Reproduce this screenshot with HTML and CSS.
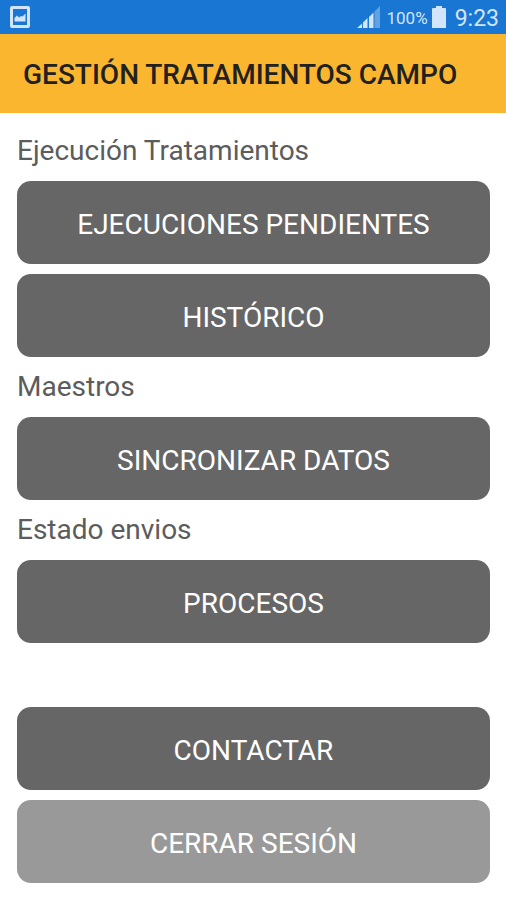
FILE: index.html
```html
<!DOCTYPE html>
<html lang="es">
<head>
<meta charset="utf-8">
<meta name="viewport" content="width=device-width, initial-scale=1">
<title>Gestión Tratamientos Campo</title>
<link rel="stylesheet" href="styles.css">
</head>
<body>
<div class="status">
  <svg class="picture-icon" viewBox="0 0 20 22" aria-hidden="true"><rect x="1.5" y="1.5" width="17" height="19" rx=".5" fill="none" stroke="currentColor" stroke-width="3"/><path fill="currentColor" d="M4.500 15.500V12L7 9.500L9 11.500L11 10L12.500 10.500L15.500 7.500V15.500Z"/></svg>
  <div class="status-info">
    <svg class="signal-icon" viewBox="0 0 24 22" aria-hidden="true"><path fill="currentColor" d="M0 22L5 17.500V22ZM6 16.500L10.500 12V22H6ZM12 11L16.500 6.500V22H12Z"/><path fill="currentColor" opacity=".4" d="M17.500 5.500L23 0V22H17.500Z"/></svg>
    <span class="percent">100%</span>
    <svg class="battery-icon" viewBox="0 0 14 22" aria-hidden="true"><path fill="currentColor" d="M4 0H10V2H13Q14 2 14 3V22H0V3Q0 2 1 2H4Z"/></svg>
    <span class="clock">9:23</span>
  </div>
</div>
<header class="bar"><h1 class="title">GESTIÓN TRATAMIENTOS CAMPO</h1></header>
<main class="menu">
  <section class="group">
    <h2 class="label">Ejecución Tratamientos</h2>
    <button class="action" type="button">EJECUCIONES PENDIENTES</button>
    <button class="action" type="button">HISTÓRICO</button>
  </section>
  <section class="group">
    <h2 class="label">Maestros</h2>
    <button class="action" type="button">SINCRONIZAR DATOS</button>
  </section>
  <section class="group">
    <h2 class="label">Estado envios</h2>
    <button class="action" type="button">PROCESOS</button>
  </section>
  <section class="group group-session">
    <button class="action" type="button">CONTACTAR</button>
    <button class="action action-muted" type="button">CERRAR SESIÓN</button>
  </section>
</main>
</body>
</html>
```
FILE: styles.css
```css
* { box-sizing: border-box; }
body { margin: 0; background: #fff; font-family: Roboto, "Liberation Sans", sans-serif; }
.status { display: flex; align-items: center; justify-content: space-between; height: 34px; padding: 0 7px 0 10px; background: #1976d2; color: #d3e5fa; }
.status-info { display: flex; align-items: center; }
.picture-icon { width: 20px; height: 22px; }
.signal-icon { width: 24px; height: 22px; margin-right: 6px; }
.percent { padding-top: 2px; font-size: 17px; margin-right: 4px; }
.battery-icon { width: 14px; height: 22px; margin-right: 9px; }
.clock { font-size: 23px; line-height: 32px; padding-top: 4px; }
.bar { display: flex; align-items: center; height: 79px; padding: 2px 23px 0; background: #fbb62f; }
.title { margin: 0; font-size: 28px; font-weight: 500; color: #212121; white-space: nowrap; }
.menu { padding: 8px 16px 16px 17px; }
.group { display: flex; flex-direction: column; gap: 10px; }
.label { margin: 0; height: 50px; line-height: 60px; font-size: 28px; font-weight: 400; color: #5c5c5c; }
.action { width: 100%; height: 83px; padding: 3px 0 0; border: 0; border-radius: 14px; background: #666; color: #fff; font: 400 28px Roboto, "Liberation Sans", sans-serif; }
.action-muted { background: #999; }
.group-session { margin-top: 64px; }
```
